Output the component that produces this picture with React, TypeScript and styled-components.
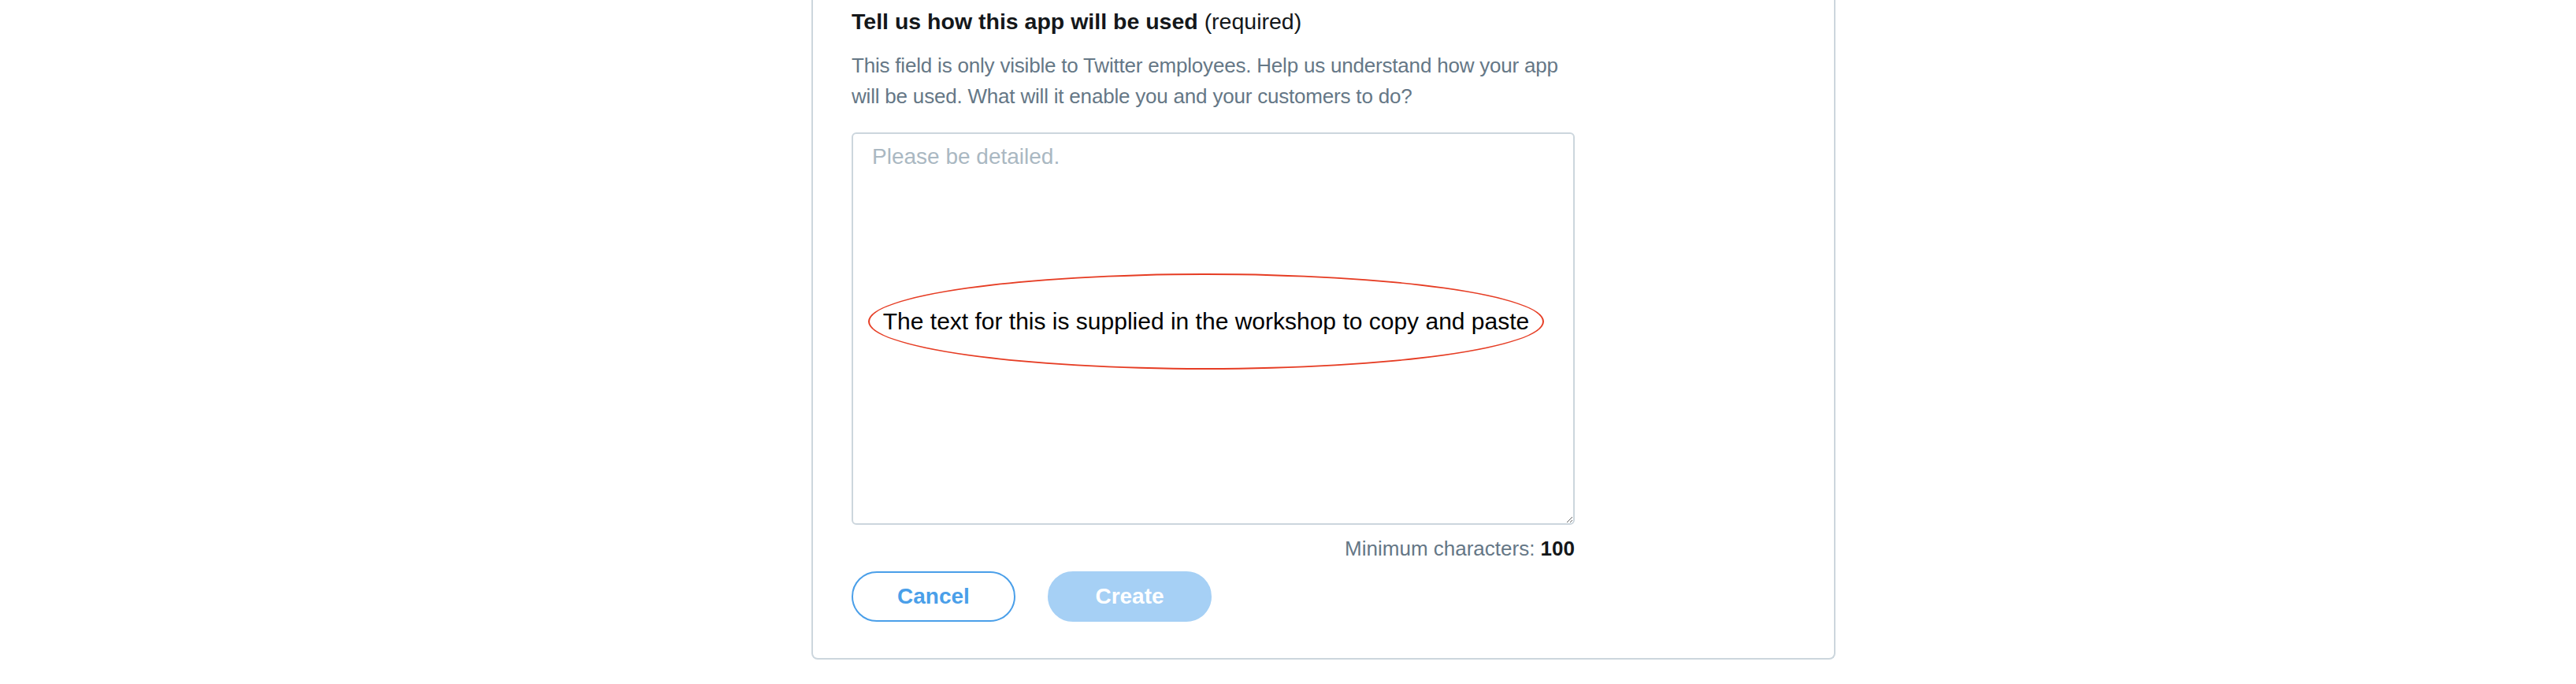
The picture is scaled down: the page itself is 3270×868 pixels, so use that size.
import React from "react";
import styled, { createGlobalStyle } from "styled-components";

const GlobalStyle = createGlobalStyle`
  body {
    margin: 0;
    background: #fff;
    font-family: "Liberation Sans", Arial, sans-serif;
  }
`;

const App = () => {
  return (
    <>
      <GlobalStyle />
      <Page>
        <Card>
          <Column>
            <Heading>
              <strong>Tell us how this app will be used</strong>{" "}
              <Required>(required)</Required>
            </Heading>
            <Help>
              This field is only visible to Twitter employees. Help us
              understand how your app will be used. What will it enable you
              and your customers to do?
            </Help>
            <FieldWrap>
              <TextArea placeholder="Please be detailed." />
              <Callout>
                The text for this is supplied in the workshop to copy and paste
              </Callout>
            </FieldWrap>
            <Counter>
              Minimum characters: <b>100</b>
            </Counter>
            <Actions>
              <Button $variant="outline">Cancel</Button>
              <Button $variant="primary" disabled>
                Create
              </Button>
            </Actions>
          </Column>
        </Card>
      </Page>
    </>
  );
};

export default App;

const Page = styled.div`
  display: flex;
  justify-content: center;
  padding-left: 90px;
  min-height: 868px;
  box-sizing: border-box;
`;

const Card = styled.section`
  width: 1300px;
  box-sizing: border-box;
  border: 2px solid #ccd6dd;
  border-top: none;
  border-radius: 0 0 8px 8px;
  padding: 9px 48px 46px 49px;
  align-self: flex-start;
`;

const Column = styled.div`
  width: 918px;
`;

const Heading = styled.h2`
  margin: 0;
  font-size: 28.5px;
  line-height: 36px;
  font-weight: 400;
  color: #14171a;

  strong {
    font-weight: 700;
  }
`;

const Required = styled.span`
  font-weight: 400;
`;

const Help = styled.p`
  margin: 19px 0 0;
  font-size: 26px;
  line-height: 39px;
  letter-spacing: -0.2px;
  color: #657786;
`;

const FieldWrap = styled.div`
  position: relative;
  margin-top: 26px;
`;

const TextArea = styled.textarea`
  display: block;
  width: 100%;
  height: 498px;
  box-sizing: border-box;
  border: 2px solid #ccd6dd;
  border-radius: 6px;
  padding: 11px 24px;
  font-family: "Liberation Sans", Arial, sans-serif;
  font-size: 28px;
  line-height: 1.3;
  color: #14171a;
  resize: vertical;
  outline: none;

  &::placeholder {
    color: #aab8c2;
  }
`;

const Callout = styled.div`
  position: absolute;
  left: 21px;
  top: 179px;
  width: 858px;
  height: 122px;
  box-sizing: border-box;
  border: 2.5px solid #e63d24;
  border-radius: 50%;
  display: flex;
  align-items: center;
  justify-content: center;
  font-family: "Liberation Sans", Arial, sans-serif;
  font-size: 30px;
  color: #000;
  white-space: nowrap;
  pointer-events: none;
`;

const Counter = styled.div`
  margin-top: 11px;
  text-align: right;
  font-size: 26px;
  line-height: 39px;
  color: #657786;

  b {
    font-weight: 700;
    color: #14171a;
  }
`;

const Actions = styled.div`
  display: flex;
  gap: 41px;
  margin-top: 9px;
`;

const Button = styled.button<{ $variant: "outline" | "primary" }>`
  width: 208px;
  height: 64px;
  box-sizing: border-box;
  border-radius: 9999px;
  font-family: "Liberation Sans", Arial, sans-serif;
  font-size: 28px;
  font-weight: 700;
  cursor: pointer;
  border: 2px solid
    ${(props) => (props.$variant === "outline" ? "#4a9fe9" : "#a6d0f5")};
  background: ${(props) => (props.$variant === "outline" ? "#fff" : "#a6d0f5")};
  color: ${(props) => (props.$variant === "outline" ? "#4a9fe9" : "#fff")};

  &:disabled {
    cursor: default;
  }
`;
